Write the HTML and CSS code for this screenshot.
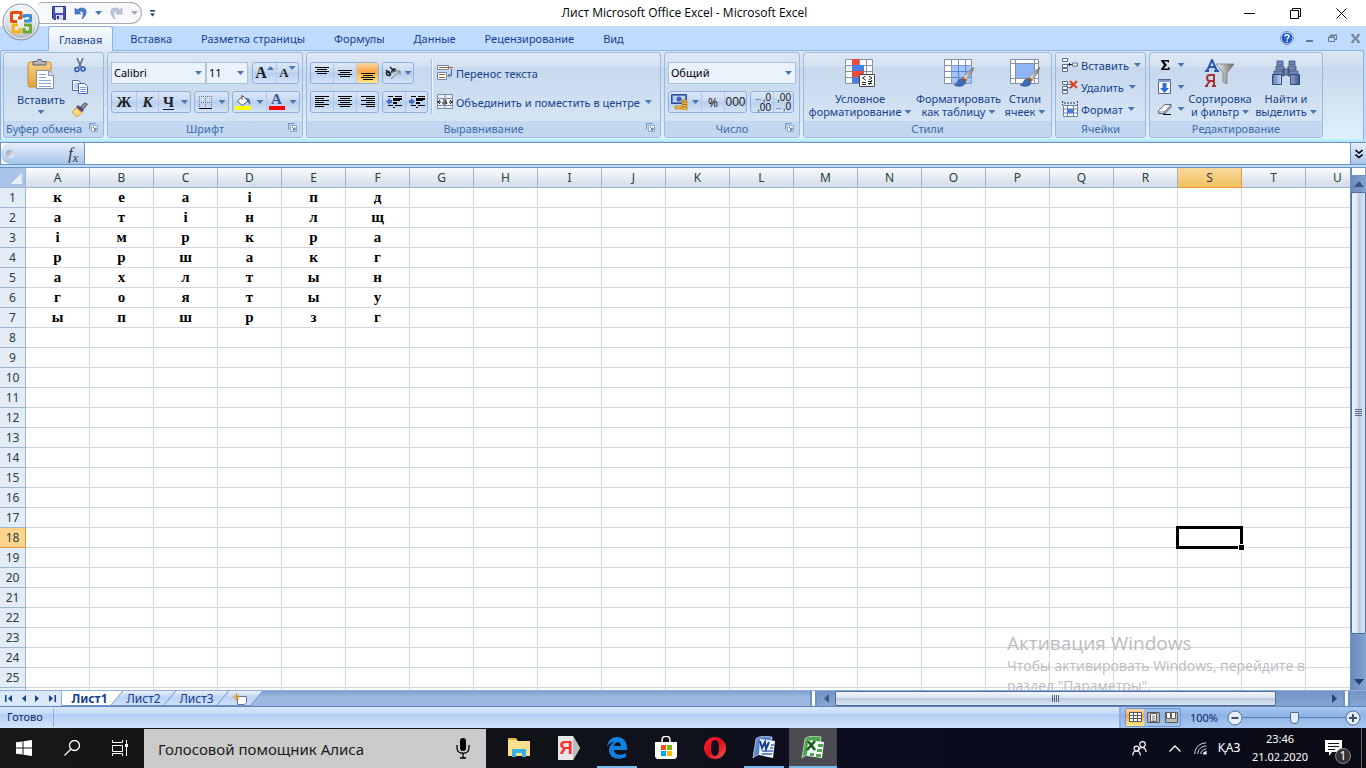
FILE: index.html
```html
<!DOCTYPE html>
<html lang="ru">
<head>
<meta charset="utf-8">
<title>Лист Microsoft Office Excel - Microsoft Excel</title>
<link rel="stylesheet" href="styles.css">
</head>
<body>
<svg class="defs" aria-hidden="true">
  <defs>
    <linearGradient id="gClip" x1="0" y1="0" x2="0" y2="1"><stop offset="0" stop-color="#f8d183"/><stop offset="1" stop-color="#e3a13c"/></linearGradient>
    <linearGradient id="gSteel" x1="0" y1="0" x2="1" y2="0"><stop offset="0" stop-color="#f2f2f2"/><stop offset="1" stop-color="#6b6b6b"/></linearGradient>
    <linearGradient id="gBlue" x1="0" y1="0" x2="1" y2="0"><stop offset="0" stop-color="#5a78b4"/><stop offset=".4" stop-color="#dfe9f8"/><stop offset="1" stop-color="#38558f"/></linearGradient>
    <linearGradient id="gOpera" x1="0" y1="0" x2="1" y2="1"><stop offset="0" stop-color="#ff1b2d"/><stop offset=".5" stop-color="#d8101f"/><stop offset="1" stop-color="#ff5a50"/></linearGradient>
    <radialGradient id="gOrb" cx=".5" cy=".3" r=".75"><stop offset="0" stop-color="#fff"/><stop offset=".6" stop-color="#dfe1e8"/><stop offset="1" stop-color="#8f99ad"/></radialGradient>
  </defs>
  <symbol id="i-launch" viewBox="0 0 9 9"><path d="M.5 6.500V.5H6.500" fill="none" stroke="#6f93c0"/><path d="M2.500 2.500H8.500V8.500H2.500Z" fill="#fff" stroke="#8aa9cf"/><path d="M4 4l3 3M7 4.500V7H4.500" fill="none" stroke="#3f5f8f"/></symbol>
  <symbol id="i-grid" viewBox="0 0 30 27"><path d="M.5.5h27v24H.5z" fill="#fff" stroke="#8390a8"/><path d="M7.500 0v25M14.500 0v25M21.500 0v25M0 6.500h28M0 12.500h28M0 18.500h28" stroke="#8390a8"/></symbol>
  <symbol id="i-brush" viewBox="0 0 20 20"><path d="M20 0c-5 3-9 7-11 11l3 2c4-4 7-8 8-13z" fill="url(#gSteel)" stroke="#777" stroke-width=".5"/><path d="M9 10l4 3-2 2-4-2z" fill="#a05a28"/><path d="M7 12c-4 0-3 5-7 6 4 2 11 2 11-3z" fill="#3e6cb5" stroke="#254a8a" stroke-width=".6"/></symbol>
</svg>

<header class="titlebar">
  <button class="orb" aria-label="Кнопка Office">
    <svg viewBox="0 0 38 38"><circle cx="19" cy="19" r="18" fill="url(#gOrb)" stroke="#8c97a8"/><circle cx="19" cy="19" r="16.500" fill="none" stroke="#fff" opacity=".8"/>
      <g fill="none" stroke-width="3" stroke-linejoin="round">
        <path d="M15 18.500H9.500V9.500H19V15h-3" stroke="#e2500f"/><path d="M22 18h6.500v-5.500H22V15" stroke="#3b8fd0"/><path d="M16 22h-5v7h7v-4" stroke="#f5b416"/><path d="M22 22h6.500v7H22v-4" stroke="#6da832"/></g></svg>
  </button>
  <div class="qat">
    <button aria-label="Сохранить"><svg width="14" height="14" viewBox="0 0 14 14"><path d="M.5.5h13v13H2l-1.500-1.500z" fill="#4a50b8" stroke="#30348c"/><path d="M3 1h8v6H3z" fill="#e8edfa"/><path d="M4 9h7v5H4z" fill="#d5d9ea"/><path d="M5 10h2v3H5z" fill="#30348c"/></svg></button>
    <button aria-label="Отменить"><svg width="13" height="13" viewBox="0 0 13 13"><path d="M1 1v6h6L5 5c3-2 6 0 3 7 6-5 5-11 0-11-2 0-4 1-5 2z" fill="#4a7bd0" stroke="#2f5bab" stroke-width=".6"/></svg></button>
    <i class="caret"></i>
    <button aria-label="Вернуть"><svg width="13" height="13" viewBox="0 0 13 13"><path d="M12 1v6H6l2-2C5 3 2 5 5 12-1 7 0 1 5 1c2 0 4 1 5 2z" fill="#bcc8da" stroke="#98a6bd" stroke-width=".6"/></svg></button>
    <i class="caret pale"></i>
  </div>
  <button class="qat-more" aria-label="Настройка панели"><svg width="5" height="7" viewBox="0 0 5 7"><path d="M0 0h5v1.500H0zM0 3.500h5L2.500 6.500z" fill="#1e3e7a"/></svg></button>
  <h1>Лист Microsoft Office Excel - Microsoft Excel</h1>
  <div class="win-controls">
    <button aria-label="Свернуть"><svg width="11" height="11" viewBox="0 0 11 11"><path d="M0 5.500h11" stroke="#000"/></svg></button>
    <button aria-label="Восстановить"><svg width="11" height="11" viewBox="0 0 11 11"><path d="M.5 2.500h8v8h-8zM2.500 2.500v-2h8v8h-2" fill="none" stroke="#000"/></svg></button>
    <button aria-label="Закрыть"><svg width="11" height="11" viewBox="0 0 11 11"><path d="M.5.5l10 10M10.500.5l-10 10" stroke="#000"/></svg></button>
  </div>
</header>

<nav class="tabs">
  <button class="active">Главная</button><button>Вставка</button><button>Разметка страницы</button><button>Формулы</button><button>Данные</button><button>Рецензирование</button><button>Вид</button>
  <div class="doc-controls">
    <button class="help" aria-label="Справка"><svg width="14" height="14" viewBox="0 0 14 14"><circle cx="7" cy="7" r="6.500" fill="#fff" stroke="#6f90c4"/><circle cx="7" cy="7" r="5.500" fill="#2459c8"/><path d="M5 5.500C5 3 9 3 9 5.500 9 7 7 7 7 8.500M7 9.500v1.500" fill="none" stroke="#fff" stroke-width="1.500"/></svg></button>
    <button aria-label="Свернуть окно"><svg width="9" height="9" viewBox="0 0 9 9"><path d="M1 7h7" stroke="#6b7687" stroke-width="2"/></svg></button>
    <button aria-label="Восстановить окно"><svg width="9" height="9" viewBox="0 0 9 9"><path d="M.5 3.500h6v4h-6zM2.500 3V1.500h6v4H7" fill="none" stroke="#6b7687"/><path d="M0 3h7M2 1h7" stroke="#6b7687"/></svg></button>
    <button aria-label="Закрыть окно"><svg width="9" height="9" viewBox="0 0 9 9"><path d="M1 1l7 7M8 1L1 8" stroke="#7b8696" stroke-width="2"/><path d="M0 .5h3M6 .5h3M0 8.500h3M6 8.500h3" stroke="#7b8696"/></svg></button>
  </div>
</nav>

<section class="ribbon">
  <div class="group g-clip">
    <div class="body">
      <button class="big"><svg width="28" height="30" viewBox="0 0 28 30"><rect x="1" y="3" width="23" height="25" rx="2" fill="url(#gClip)" stroke="#c98f38"/><path d="M6 6V2.500h4L11 .5h3l1 2h4V6z" fill="#b5b5b5" stroke="#5f6673"/><path d="M9.500 11.500h12l5 5v13h-17z" fill="#fff" stroke="#8090b0"/><path d="M21.500 11.500v5h5" fill="#dbe4f4" stroke="#8090b0"/><path d="M12 15.500h7M12 18.500h7M12 21.500h12M12 24.500h12M12 27.500h12" stroke="#8aa6d8"/></svg><span>Вставить</span><i class="caret"></i></button>
      <div class="stack">
        <button aria-label="Вырезать"><svg width="12" height="15" viewBox="0 0 12 15"><path d="M3 0l4 9M9 0L5 9" stroke="#5c6b85" stroke-width="1.600"/><circle cx="3" cy="11.500" r="2" fill="none" stroke="#2c55a8" stroke-width="1.500"/><circle cx="9" cy="11" r="2" fill="none" stroke="#2c55a8" stroke-width="1.500"/></svg></button>
        <button aria-label="Копировать"><svg width="16" height="14" viewBox="0 0 16 14"><path d="M.5.500h6l2 2v8h-8z" fill="#fff" stroke="#4a6ab0"/><path d="M2 4h5M2 6h5M2 8h5" stroke="#7e9fd8"/><path d="M6.500 3.500h6l3 3v7h-9z" fill="#fff" stroke="#4a6ab0"/><path d="M8 7.500h6M8 9.500h6M8 11.500h6" stroke="#7e9fd8"/></svg></button>
        <button aria-label="Формат по образцу"><svg width="16" height="15" viewBox="0 0 16 15"><path d="M15.500 2l-4 5-3-2 4-4z" fill="#8b8f98" stroke="#4b5466"/><path d="M6 3l6 5-2 2.500-6-5z" fill="#5b4a80"/><path d="M4 5.500l6 5-4 4c-2 0-5-2-5.500-5z" fill="#f7dc7c" stroke="#bd8c28" stroke-width=".8"/></svg></button>
      </div>
    </div>
    <footer>Буфер обмена<button aria-label="Параметры"><svg width="9" height="9"><use href="#i-launch"/></svg></button></footer>
  </div>

  <div class="group g-font">
    <div class="body rows">
      <div class="row">
        <label class="combo name"><select aria-label="Шрифт"><option>Calibri</option></select><i class="caret"></i></label><label class="combo size"><select aria-label="Размер"><option>11</option></select><i class="caret"></i></label>
        <div class="btns gap4"><button aria-label="Увеличить" class="w23 serif"><span class="a-big">A</span><i class="caret up"></i></button><button aria-label="Уменьшить" class="w22 serif"><span class="a-small">A</span><i class="caret top"></i></button></div>
      </div>
      <div class="row">
        <div class="btns"><button class="w24 serif">Ж</button><button class="w22 serif it">К</button><button class="w20 serif un">Ч</button><button class="w12" aria-label="Ещё"><i class="caret"></i></button></div>
        <div class="btns"><button class="w20" aria-label="Границы"><svg width="13" height="13" viewBox="0 0 13 13"><path d="M.5 0v12M6.500 0v12M12.500 0v12M0 .5h13M0 6.500h13" stroke="#777" stroke-dasharray="1 1"/><path d="M0 12.500h13" stroke="#000"/></svg></button><button class="w13" aria-label="Ещё"><i class="caret"></i></button></div>
        <div class="btns"><button class="w20" aria-label="Заливка"><svg width="16" height="16" viewBox="0 0 16 16"><path d="M2.500 7L8 2l5 5-6 4.500z" fill="#fff" stroke="#555"/><path d="M7 6V1" stroke="#555"/><path d="M11 4c4 0 5 3 4 7-2-1-1-4-4-5z" fill="#456fb8"/><path d="M0 12h16v4H0z" fill="#ff0"/></svg></button><button class="w13" aria-label="Ещё"><i class="caret"></i></button><button class="w20 fontcolor" aria-label="Цвет текста">A</button><button class="w13" aria-label="Ещё"><i class="caret"></i></button></div>
      </div>
    </div>
    <footer>Шрифт<button aria-label="Параметры"><svg width="9" height="9"><use href="#i-launch"/></svg></button></footer>
  </div>

  <div class="group g-align">
    <div class="body">
      <div class="rows">
        <div class="row">
          <div class="btns"><button class="w22" aria-label="По верхнему краю"><svg width="14" height="18" viewBox="0 0 14 18"><path d="M0 3.500h14M2 5.500h10M0 7.500h14M2 9.500h10" stroke="#000"/></svg></button><button class="w23" aria-label="По середине"><svg width="14" height="18" viewBox="0 0 14 18"><path d="M0 6.500h14M2 8.500h10M0 10.500h14M2 12.500h10" stroke="#000"/></svg></button><button class="w22 on" aria-label="По нижнему краю"><svg width="14" height="18" viewBox="0 0 14 18"><path d="M0 9.500h14M2 11.500h10M0 13.500h14M2 15.500h10" stroke="#000"/></svg></button></div>
          <div class="btns"><button class="w30" aria-label="Ориентация"><svg width="16" height="14" viewBox="0 0 16 14"><g fill="none" stroke="#222" stroke-width="1.500"><path d="M1 4l5 5M2 9c-2-3 2-5 3-2s0 3-3 2M5 1l5 5M7 7c-1-3 2-5 4-3"/></g><path d="M6 13l9-8M11 5h4v4" fill="none" stroke="#777"/></svg><i class="caret"></i></button></div>
        </div>
        <div class="row">
          <div class="btns"><button class="w22" aria-label="По левому краю"><svg width="14" height="12" viewBox="0 0 14 12"><path d="M0 .5h14M0 2.500h9M0 4.500h14M0 6.500h9M0 8.500h14M0 10.500h9" stroke="#000"/></svg></button><button class="w23" aria-label="По центру"><svg width="14" height="12" viewBox="0 0 14 12"><path d="M0 .5h14M2 2.500h10M0 4.500h14M2 6.500h10M0 8.500h14M2 10.500h10" stroke="#000"/></svg></button><button class="w22" aria-label="По правому краю"><svg width="14" height="12" viewBox="0 0 14 12"><path d="M0 .5h14M5 2.500h9M0 4.500h14M5 6.500h9M0 8.500h14M5 10.500h9" stroke="#000"/></svg></button></div>
          <div class="btns"><button class="w22" aria-label="Уменьшить отступ"><svg width="16" height="14" viewBox="0 0 16 14"><path d="M2 1.500h5M9 1.500h7M7 3.500h9M7 5.500h7M7 8.500h4M2 10.500h5M9 10.500h7M7 12.500h2" stroke="#000"/><path d="M7 4.500h9M7 7.500h4" stroke="#000"/><path d="M0 6.500L4 3v2h2v3H4v2z" fill="#3c6cc8"/></svg></button><button class="w22" aria-label="Увеличить отступ"><svg width="16" height="14" viewBox="0 0 16 14"><path d="M2 1.500h5M9 1.500h7M7 3.500h9M7 5.500h7M7 8.500h4M2 10.500h5M9 10.500h7M7 12.500h2" stroke="#000"/><path d="M7 4.500h9M7 7.500h4" stroke="#000"/><path d="M6 6.500L2 3v2H0v3h2v2z" fill="#3c6cc8"/></svg></button></div>
        </div>
      </div>
      <div class="divider"></div>
      <div class="rows texts">
        <button class="txt"><svg width="16" height="16" viewBox="0 0 16 16"><path d="M.5.5h11v4H.5zM.5 7.500h9v7h-9z" fill="#fff" stroke="#7588a8"/><path d="M2 2.500h14M2 9.500h6M2 12.500h6" stroke="#a4622c"/><path d="M14.500 4v6M11 10.500h4M13 8.500l-2 2 2 2" fill="none" stroke="#4a6a9a"/></svg>Перенос текста</button>
        <button class="txt"><svg width="16" height="16" viewBox="0 0 16 16"><path d="M.5.5h15v14H.5z" fill="#eef3fb" stroke="#7c8ca8"/><path d="M0 4.500h16M0 11.500h16M8 0v4M8 12v3" stroke="#7c8ca8"/><path d="M0 8h4M12 8h4M3 6l-2 2 2 2M13 6l2 2-2 2M6 6h3v4H6V8h3l1 2" fill="none" stroke="#222"/></svg>Объединить и поместить в центре<i class="caret"></i></button>
      </div>
    </div>
    <footer>Выравнивание<button aria-label="Параметры"><svg width="9" height="9"><use href="#i-launch"/></svg></button></footer>
  </div>

  <div class="group g-num">
    <div class="body rows">
      <div class="row"><label class="combo format"><select aria-label="Числовой формат"><option>Общий</option></select><i class="caret"></i></label></div>
      <div class="row">
        <div class="btns"><button class="w32" aria-label="Финансовый формат"><svg width="17" height="16" viewBox="0 0 17 16"><path d="M.5.5h15v9H.5z" fill="#5c83c8" stroke="#2e4d90"/><path d="M2 2h12v6H2z" fill="#b9cdf0"/><circle cx="8" cy="5" r="2.500" fill="#3e62ac"/><path d="M11 6h5v10h-5zM4 12h6v3H4z" fill="#f0b93a" stroke="#a87412" stroke-width=".6"/><path d="M11 8h5M11 10.500h5M11 13h5" stroke="#a87412"/></svg><i class="caret"></i></button><button class="w23 dark">%</button><button class="w22 dark narrow">000</button></div>
        <div class="btns"><button class="w22 digits" aria-label="Увеличить разрядность"><span><b>←</b>,0</span><span>,00</span></button><button class="w20 digits" aria-label="Уменьшить разрядность"><span>,00</span><span><b>→</b>,0</span></button></div>
      </div>
    </div>
    <footer>Число<button aria-label="Параметры"><svg width="9" height="9"><use href="#i-launch"/></svg></button></footer>
  </div>

  <div class="group g-styles">
    <div class="body">
      <button class="big b1"><svg width="30" height="28" viewBox="0 0 30 28"><use href="#i-grid" width="30" height="27"/><path d="M7 0h7v6H7zM7 12h12v6H7z" fill="#f04a3c"/><path d="M7 6h12v6H7zM7 18h7v6H7z" fill="#4d7fe0"/><path d="M14.500 15.500h15v12h-15z" fill="#fff" stroke="#445"/><path d="M20.500 17l-3 2 3 2M17 23.500h4M17 25.500h4M24 17l3 2-3 2M23 22.500h4M23 24.500h4M27 21l-3 5" fill="none" stroke="#222"/></svg><span>Условное<br>форматирование<i class="caret"></i></span></button>
      <button class="big b2"><svg width="30" height="28" viewBox="0 0 30 28"><use href="#i-grid" width="30" height="27"/><path d="M7.500 6.500h20v18h-20z" fill="#8fb5f5" opacity=".8"/><path d="M14.500 6v19M21.500 6v19M7 12.500h21M7 18.500h21" stroke="#5f87cf"/><use href="#i-brush" x="10" y="8" width="20" height="20"/></svg><span>Форматировать<br>как таблицу<i class="caret"></i></span></button>
      <button class="big b3"><svg width="30" height="28" viewBox="0 0 30 28"><path d="M.5.5h28v24H.5z" fill="#fff" stroke="#8390a8"/><path d="M5.500 0v25M24.500 0v25M0 4.500h29M0 19.500h29" stroke="#8390a8"/><path d="M6 5h18v14H6z" fill="#8fb5f5"/><use href="#i-brush" x="10" y="8" width="20" height="20"/></svg><span>Стили<br>ячеек<i class="caret"></i></span></button>
    </div>
    <footer>Стили</footer>
  </div>

  <div class="group g-cells">
    <div class="body stacked">
      <button class="txt"><svg width="16" height="14" viewBox="0 0 16 14"><path d="M.5.5h5v3h-5zM.5 6.500h5v3h-5zM.5 10.500h5v3h-5zM10.500 5h5v3h-5z" fill="#fff" stroke="#5b6d8f"/><path d="M6 6.500h4M8 5L6.500 6.500 8 8" fill="none" stroke="#111"/></svg>Вставить<i class="caret"></i></button>
      <button class="txt"><svg width="16" height="14" viewBox="0 0 16 14"><path d="M.5 1.500h5v3h-5zM.5 6.500h5v3h-5zM.5 10.500h5v3h-5zM5 4.500h5v3H5z" fill="#fff" stroke="#5b6d8f"/><path d="M8 1l7 7M15 1L8 8" stroke="#e2401c" stroke-width="2"/></svg>Удалить<i class="caret"></i></button>
      <button class="txt"><svg width="16" height="16" viewBox="0 0 16 16"><path d="M1.500 4.500h14v11h-14z" fill="#fff" stroke="#6d80a5"/><path d="M5.500 4v12M11.500 4v12M1 8h15M1 12h15" stroke="#6d80a5"/><path d="M6 8h5v4H6z" fill="#3f7de0"/><path d="M.5 0v4M15.500 0v4M2 2h12" stroke="#333" stroke-dasharray="2 1"/></svg>Формат<i class="caret"></i></button>
    </div>
    <footer>Ячейки</footer>
  </div>

  <div class="group g-edit">
    <div class="body">
      <div class="stack icons">
        <button aria-label="Сумма"><svg width="14" height="14" viewBox="0 0 14 14"><path d="M3 2h8v2.500h-1L9.500 3.500H6L9 7l-3.500 3.500H10l.5-1.500h1V12H3v-1l3-4-3-4z" fill="#000"/></svg><i class="caret"></i></button>
        <button aria-label="Заполнить"><svg width="14" height="16" viewBox="0 0 14 16"><path d="M.5.5h12v14H.5z" fill="#fff" stroke="#4f6690"/><path d="M0 2h13" stroke="#7d9ace" stroke-width="2"/><path d="M4.500 4v5H2l4.500 5L11 9H8.500V4z" fill="#2f6bd8"/></svg><i class="caret"></i></button>
        <button aria-label="Очистить"><svg width="14" height="14" viewBox="0 0 14 14"><path d="M.5 8.500L7 2.500h6L7 9.500H.5z" fill="#fff" stroke="#5a6478"/><path d="M.5 8.500v3H7v-2M7 11.500L13 5V2.500" fill="#bcc6da" stroke="#5a6478"/><path d="M5 12.500h8" stroke="#000"/></svg><i class="caret"></i></button>
      </div>
      <button class="big b4"><svg width="30" height="28" viewBox="0 0 30 28"><path d="M11 5h18l-7 9v11l-4-2V14z" fill="url(#gSteel)" stroke="#777" stroke-width=".7"/><g fill="none" stroke-width="2"><path d="M2 12L7 1l5 11M4 8h6M0 12h4M9 12h5" stroke="#2c55b0"/><path d="M9 27V16H5c-4 0-4 6 0 6h4M5 22l-4 5M7 27h4M0 27h3" stroke="#a83330"/></g></svg><span>Сортировка<br>и фильтр<i class="caret"></i></span></button>
      <button class="big b5"><svg width="28" height="28" viewBox="0 0 28 28"><path d="M5 2h6v4H5zM17 2h6v4h-6zM4 7h8v4H4zM16 7h8v4h-8zM2 12h10v5H2zM16 12h10v5H16zM11 10h6v6h-6z" fill="#7187b3" stroke="#2f4470" stroke-width=".7"/><path d="M.5 15.500h9v10h-9zM18.500 15.500h9v10h-9z" fill="url(#gBlue)" stroke="#2f4a80"/></svg><span>Найти и<br>выделить<i class="caret"></i></span></button>
    </div>
    <footer>Редактирование</footer>
  </div>
</section>

<section class="formula">
  <div class="namebox"><i class="knob"></i><button aria-label="Вставить функцию"><em>f</em><sub>x</sub></button></div>
  <input type="text" aria-label="Строка формул">
  <button class="expand" aria-label="Развернуть"><svg width="8" height="10" viewBox="0 0 8 10"><path d="M.5 1L4 4l3.500-3M.5 5.500l3.500 3 3.500-3" fill="none" stroke="#000" stroke-width="1.600"/></svg></button>
</section>

<main class="workspace">
  <div class="sheet">
    <table><thead><tr id="heads"></tr></thead><tbody id="cells"></tbody></table>
    <div class="watermark"><strong>Активация Windows</strong><p>Чтобы активировать Windows, перейдите в раздел "Параметры".</p></div>
  </div>
  <div class="vscroll">
    <div class="split"></div>
    <button aria-label="Вверх"><svg width="10" height="6" viewBox="0 0 10 6"><path d="M5 0l5 6H0z" fill="#3b5680"/></svg></button>
    <div class="thumb"></div>
    <div class="rest"></div>
    <button aria-label="Вниз"><svg width="10" height="6" viewBox="0 0 10 6"><path d="M5 6L0 0h10z" fill="#2a416c"/></svg></button>
  </div>
</main>

<div class="sheetbar">
  <div class="sheetnav">
    <button aria-label="Первый лист"><svg width="7" height="7" viewBox="0 0 7 7"><path d="M0 0h1.500v7H0zM7 0v7L3 3.500z" fill="#15428b"/></svg></button>
    <button aria-label="Предыдущий лист"><svg width="7" height="7" viewBox="0 0 7 7"><path d="M6 0v7L2 3.500z" fill="#15428b"/></svg></button>
    <button aria-label="Следующий лист"><svg width="7" height="7" viewBox="0 0 7 7"><path d="M1 0v7l4-3.500z" fill="#15428b"/></svg></button>
    <button aria-label="Последний лист"><svg width="7" height="7" viewBox="0 0 7 7"><path d="M0 0v7l4-3.500zM5.500 0H7v7H5.500z" fill="#15428b"/></svg></button>
  </div>
  <button class="st current"><span>Лист1</span></button>
  <button class="st"><span>Лист2</span></button>
  <button class="st"><span>Лист3</span></button>
  <button class="st new" aria-label="Вставить лист"><svg width="15" height="12" viewBox="0 0 15 12"><path d="M4.500 3.500h9v6l-2 2h-7z" fill="#fff" stroke="#6678a0"/><path d="M3.500 0v8M0 4h7M1 1.500l5 5M6 1.500l-5 5" stroke="#e59a2c"/></svg></button>
  <div class="spacer"></div>
  <div class="hscroll">
    <i class="hsplit"></i>
    <button aria-label="Влево"><svg width="5" height="9" viewBox="0 0 5 9"><path d="M5 0v9L0 4.500z" fill="#3b5680"/></svg></button>
    <div class="thumb"></div>
    <div class="rest"></div>
    <button aria-label="Вправо"><svg width="5" height="9" viewBox="0 0 5 9"><path d="M0 0v9l5-4.500z" fill="#2a416c"/></svg></button>
    <i class="hsplit"></i>
  </div>
</div>

<footer class="status">
  <span class="ready">Готово</span>
  <div class="spacer"></div>
  <div class="zoombox">
    <div class="views">
      <button class="on" aria-label="Обычный"><svg width="13" height="11" viewBox="0 0 13 11"><path d="M.5.500h12v9H.5zM0 3.500h13M0 6.500h13M4.500 0v10M8.500 0v10" fill="#fff" stroke="#5a5a5a"/></svg></button>
      <button aria-label="Разметка"><svg width="13" height="11" viewBox="0 0 13 11"><path d="M.5.500h12v10H.5z" fill="#bbb" stroke="#5a5a5a"/><path d="M3.500 1.500h6v8h-6z" fill="#fff" stroke="#5a5a5a"/><path d="M5 4h3M5 6h3M5 8h3" stroke="#777"/></svg></button>
      <button aria-label="Страничный"><svg width="13" height="11" viewBox="0 0 13 11"><path d="M.5.500h12v10H.5z" fill="#bbb" stroke="#5a5a5a"/><path d="M1.500.5h4v6h-4zM6.500.5h4v6h-4z" fill="#fff" stroke="#5a5a5a"/></svg></button>
    </div>
    <span class="pct">100%</span>
    <button class="round" aria-label="Уменьшить масштаб"><svg width="16" height="16" viewBox="0 0 16 16"><circle cx="8" cy="8" r="7" fill="#e4eefb" stroke="#4d6b9c"/><path d="M4.500 8h7" stroke="#44506a" stroke-width="2"/></svg></button>
    <input type="range" min="0" max="100" value="50" aria-label="Масштаб">
    <button class="round" aria-label="Увеличить масштаб"><svg width="16" height="16" viewBox="0 0 16 16"><circle cx="8" cy="8" r="7" fill="#e4eefb" stroke="#4d6b9c"/><path d="M4 8h8M8 4v8" stroke="#44506a" stroke-width="2"/></svg></button>
  </div>
</footer>

<footer class="taskbar">
  <button class="t48" aria-label="Пуск"><svg width="16" height="16" viewBox="0 0 16 16"><path d="M0 2.300L6.500 1.400V7.500H0zM7.500 1.200L16 0v7.500H7.500zM0 8.500h6.500v6.100L0 13.700zM7.500 8.500H16V16l-8.500-1.200z" fill="#fff"/></svg></button>
  <button class="t48" aria-label="Поиск"><svg width="16" height="16" viewBox="0 0 16 16"><circle cx="10.500" cy="5.500" r="5" fill="none" stroke="#fff" stroke-width="1.300"/><path d="M7 9L.5 15.500" stroke="#fff" stroke-width="1.300"/></svg></button>
  <button class="t48" aria-label="Представление задач"><svg width="17" height="16" viewBox="0 0 17 16"><path d="M.5 0v2.500h10V0M.5 5.500h10v6H.5zM.5 16v-2.500h10V16M14.500 0v16" fill="none" stroke="#fff"/><path d="M13 4h3v3h-3z" fill="#fff"/></svg></button>
  <button class="alice"><span>Голосовой помощник Алиса</span><svg width="14" height="21" viewBox="0 0 14 21"><rect x="4" y="0" width="6" height="13" rx="3" fill="#000"/><path d="M1 7v3c0 7 12 7 12 0V7M7 15v5M4 20h6" fill="none" stroke="#000" stroke-width="1.300"/></svg></button>
  <div class="apps">
    <button aria-label="Проводник"><svg width="22" height="20" viewBox="0 0 22 20"><path d="M0 1h8l2 2h12v15H0z" fill="#fbe08c"/><path d="M0 0h8l1 2H0z" fill="#e8b43a"/><path d="M4 19v-8h14v8h-4v-4H8v4z" fill="#35b1e6"/></svg></button>
    <button aria-label="Яндекс" class="yandex"><svg width="24" height="24" viewBox="0 0 24 24"><path d="M2 0h15l7 12-7 12H2z" fill="#e8e8e8"/><path d="M17 0l7 12-7 12z" fill="#bbb"/></svg><span>Я</span></button>
    <button aria-label="Edge" class="run"><svg width="20" height="22" viewBox="0 0 20 22"><path d="M0 10C1 3 5 0 10 0c7 0 10 5 10 11v2H7c0 5 7 6 12 3v4C11 24 2 21 2 13c0-4 3-7 6-8C3 5 1 8 0 10zm7-1h7c0-5-6-5-7 0z" fill="#0f7fe0"/></svg></button>
    <button aria-label="Магазин"><svg width="24" height="24" viewBox="0 0 24 24"><path d="M8 7V4c0-5 8-5 8 0v3" fill="none" stroke="#fff" stroke-width="1.500"/><path d="M1 6h22v15l-2 2H3l-2-2z" fill="#fff"/><path d="M7 9h5v5H7z" fill="#f25022"/><path d="M13 9h5v5h-5z" fill="#7fba00"/><path d="M7 15h5v5H7z" fill="#00a4ef"/><path d="M13 15h5v5h-5z" fill="#ffb900"/></svg></button>
    <button aria-label="Opera"><svg width="24" height="24" viewBox="0 0 24 24"><path d="M12 1a11 11 0 1 0 0 22 11 11 0 1 0 0-22zm0 3c3 0 4 4 4 8s-1 8-4 8-4-4-4-8 1-8 4-8z" fill="url(#gOpera)" fill-rule="evenodd"/></svg></button>
    <button aria-label="Word" class="run"><svg width="24" height="24" viewBox="0 0 24 24"><path d="M1 22L4 3c1-3 10-3 16-2l-2 18C11 17 5 18 1 22z" fill="#5a86cf" stroke="#dfe9fa" stroke-width=".7"/><path d="M8 3l15 2-2 17-14-3z" fill="#f2f6fd"/><path d="M19 9h3M18 12h3M10 15h11M10 18h10" stroke="#3f68b4" stroke-width="1.400"/><path d="M8 5l2 7 3-6 1 7 3-7" fill="none" stroke="#1d4190" stroke-width="2"/></svg></button>
    <button aria-label="Excel" class="run focus"><svg width="24" height="24" viewBox="0 0 24 24"><path d="M1 22L4 3c1-3 10-3 16-2l-2 18C11 17 5 18 1 22z" fill="#4ba64b" stroke="#dff5df" stroke-width=".7"/><path d="M7 4l16 2-2 16-15-2z" fill="#f2faf2"/><path d="M17 8h5v3h-5zM16 13h5v3h-5zM15 18h5v3h-5zM9 17h4v3H9z" fill="#50a550"/><path d="M7 5l7 9M14 5L6 14" stroke="#1d5a20" stroke-width="2.600"/></svg></button>
  </div>
  <div class="spacer"></div>
  <div class="tray">
    <button class="p-people" aria-label="Люди"><svg width="15" height="15" viewBox="0 0 15 15"><g fill="none" stroke="#fff" stroke-width="1.200"><circle cx="10.500" cy="3.500" r="2.800"/><path d="M7 9c1-4 7-3 7 2"/><circle cx="4.500" cy="7.500" r="2.400"/><path d="M.8 14.500c0-6 7.500-6 7.500 0"/></g></svg></button>
    <button class="p-up" aria-label="Скрытые значки"><svg width="12" height="7" viewBox="0 0 12 7"><path d="M.5 6.500L6 1l5.500 5.500" fill="none" stroke="#fff" stroke-width="1.300"/></svg></button>
    <button class="p-wifi" aria-label="Сеть"><svg width="13" height="13" viewBox="0 0 13 13"><g fill="none" stroke="#ddd"><path d="M.8 12C1 5 6 1 12 1M3.800 12c0-5 4-8 8.500-8M6.800 12c0-3 3-5 5.500-5"/></g><path d="M9 12.500c0-2 2-3.500 3.500-3.500v3.500z" fill="#fff"/></svg></button>
    <button class="lang">ҚАЗ</button>
    <button class="clock"><time>23:46</time><time>21.02.2020</time></button>
    <button class="notify" aria-label="Уведомления"><svg width="17" height="16" viewBox="0 0 17 16"><path d="M0 0h17v12H7l-3 4v-4H0z" fill="#fff"/><path d="M3 3.500h11M3 6.500h11M3 9.500h7" stroke="#111"/></svg><span>1</span></button>
    <i class="peek"></i>
  </div>
</footer>
<script src="script.js"></script>
</body>
</html>
```
FILE: styles.css
```css
:root { --ink: #15428b; --ui: "Noto Sans", "Open Sans", sans-serif; }
* { box-sizing: border-box; }
body { margin: 0; height: 100vh; display: flex; flex-direction: column; overflow: hidden; font: 11px/13px var(--ui); color: var(--ink); background: #bfdbff; }
button { border: 0; padding: 0; margin: 0; background: none; font: inherit; color: inherit; display: flex; align-items: center; justify-content: center; white-space: nowrap; }
svg { display: block; flex: none; }
.defs { position: absolute; width: 0; height: 0; }
.spacer { flex: 1; }
.caret { flex: none; display: inline-block; width: 7px; height: 4px; background: #4a76b2; clip-path: polygon(0 0, 100% 0, 50% 100%); }
.caret.pale { background: #a4abb8; }

.titlebar { position: relative; height: 26px; flex: none; background: #fff; display: flex; align-items: center; padding-left: 38px; }
.orb { position: absolute; left: 2px; top: 3px; width: 38px; height: 38px; z-index: 2; }
.orb svg { width: 38px; height: 38px; }
.qat { height: 22px; width: 104px; border: 1px solid #a6abb5; border-left: 0; border-radius: 4px 11px 11px 0; background: #f7f8fa; display: flex; align-items: center; gap: 8px; padding-left: 14px; }
.qat-more { width: 20px; height: 20px; }
h1 { position: absolute; inset: 0; margin: 0; font: 12px/26px "Open Sans", sans-serif; color: #000; text-align: center; padding-left: 3px; pointer-events: none; }
.win-controls { margin-left: auto; display: flex; padding-right: 2px; }
.win-controls button { width: 46px; height: 24px; }

.tabs { height: 24px; flex: none; display: flex; gap: 1px; padding-left: 48px; background: #bfdbff; position: relative; z-index: 1; }
.tabs > button { padding: 0 14px; height: 25px; }
.tabs > .active { padding: 0 10px; margin-right: 2px; background: linear-gradient(#f7fbff, #dde8f5); border: 1px solid #8db2e3; border-bottom: 0; border-radius: 3px 3px 0 0; }
.doc-controls { margin-left: auto; display: flex; align-items: center; gap: 14px; padding-right: 6px; }
.help { width: 9px; }

.ribbon { flex: none; display: flex; gap: 3px; padding: 1px 3px 1px 2px; height: 91px; border: 1px solid #8db2e3; border-bottom: 2px solid #b5f3fa; border-radius: 3px; background: linear-gradient(#dbe6f4, #cfdded 18%, #c9d9ed 20%, #e0effb); margin-right: 2px; }
.group { display: flex; flex-direction: column; border: 1px solid #9dbadb; border-radius: 3px; background: linear-gradient(#dde8f5, #d4e1f0 16%, #c7d8ed 17%, #d9e8f6); overflow: hidden; flex: none; }
.body { flex: 1; display: flex; min-height: 0; }
.group > footer { position: relative; height: 16px; background: #c1d8f0; color: #3e6aaa; line-height: 16px; text-align: center; }
.group > footer button { position: absolute; right: 5px; top: 2px; }
.g-clip { width: 101px; } .g-font { width: 196px; } .g-align { width: 355px; } .g-num { width: 136px; }
.g-styles { width: 249px; } .g-cells { width: 91px; } .g-edit { width: 174px; }
.g-clip > footer { text-align: left; padding-left: 2px; }
.g-clip .body { padding-left: 7px; }
.g-clip .big { width: 60px; }
.big { flex-direction: column; justify-content: flex-start; padding-top: 6px; gap: 5px; }
.big span { text-align: center; line-height: 13px; }
.big span .caret { margin-left: 3px; vertical-align: 2px; }
.g-clip .big { gap: 4px; }
.stack { display: flex; flex-direction: column; padding: 1px 0; width: 18px; }
.stack button { height: 22px; }
.stack.icons { width: 36px; padding-left: 6px; }
.stack.icons button { gap: 6px; }
.b1 { width: 112px; } .b2 { width: 85px; } .b3 { width: 48px; } .b4 { width: 68px; } .b5 { width: 64px; }
.rows { display: flex; flex-direction: column; gap: 7px; padding: 9px 3px 0; }
.row { display: flex; gap: 3px; height: 22px; }
.g-font .row:first-child, .g-num .row:first-child { gap: 0; }
.gap4 { margin-left: 4px; }
.btns { display: flex; height: 22px; border: 1px solid #8fb0de; border-radius: 3px; background: linear-gradient(#dce8f7, #c6d8f0 45%, #b8cfee 50%, #d3e3f7); }
.btns button { position: relative; height: 20px; }
.btns button + button { border-left: 1px solid #b2c9e8; }
.btns button.w12, .btns button.w13 { border-left-color: transparent; }
.w12 { width: 12px; } .w13 { width: 13px; } .w20 { width: 20px; } .w22 { width: 22px; } .w23 { width: 23px; } .w24 { width: 24px; } .w30 { width: 30px; gap: 4px; } .w32 { width: 32px; gap: 4px; }
.on { background: linear-gradient(#fcd9a6, #fba340 45%, #ffb958 55%, #ffe78a); }
.serif { font: bold 15px/18px "Liberation Serif", serif; color: #1c1c28; }
.it { font-style: italic; } .un { text-decoration: underline; text-underline-offset: 2px; }
.a-big { font-size: 16px; } .a-small { font-size: 13px; }
.serif .caret { align-self: flex-start; margin-top: 3px; }
.serif.w12 .caret { align-self: center; margin-top: 0; }
.serif .up { transform: rotate(180deg); }
.fontcolor { font: bold 15px/13px "Liberation Serif", serif; color: #3c5690; align-items: flex-start; padding-top: 1px; }
.fontcolor::after { content: ""; position: absolute; left: 2px; right: 1px; bottom: 2px; height: 4px; background: #f00; }
.combo { position: relative; display: block; height: 22px; }
.combo select { appearance: none; width: 100%; height: 22px; border: 1px solid #abc1de; border-radius: 0; background: #eaf2fb; font: 11px/18px var(--ui); color: #000; padding: 0 2px; }
.combo .caret { position: absolute; right: 4px; top: 9px; }
.name { width: 97px; } .size { width: 43px; } .format { width: 128px; }
.divider { width: 2px; height: 55px; margin: 6px 1px 0 0; border-left: 1px solid #a3bfe2; border-right: 1px solid #eef5fc; }
.txt { gap: 3px; justify-content: flex-start; height: 22px; }
.txt .caret { margin-left: 2px; }
.stacked { flex-direction: column; padding: 1px 6px 0; }
.dark { color: #222; font-size: 12px; }
.narrow { font: 12px/14px "Liberation Sans", sans-serif; }
.digits { flex-direction: column; align-items: flex-end; font: 10px/9px "Liberation Sans", sans-serif; color: #111; padding-right: 2px; }
.digits b { color: #2f62c0; font-weight: 400; font-size: 9px; }

.formula { flex: none; display: flex; height: 23px; margin-top: 1px; border: 1px solid #6a93c4; border-right: 0; background: #fff; }
.namebox { width: 84px; border-right: 1px solid #6a93c4; background: linear-gradient(#e6effa, #a6c4ea); display: flex; align-items: center; justify-content: space-between; padding: 0 6px 0 5px; border-radius: 9px 0 0 9px; }
.knob { width: 8px; height: 8px; border-radius: 50%; background: linear-gradient(135deg, #8c97a8, #fff); }
.namebox button { font: 16px/18px "Liberation Serif", serif; color: #333; }
.namebox sub { font-size: 12px; line-height: 10px; font-style: italic; align-self: flex-end; }
.formula input { flex: 1; border: 0; padding: 0 4px; outline: 0; background: #fff; }
.expand { width: 16px; background: linear-gradient(#e6effa, #a6c4ea); border-left: 1px solid #6a93c4; }

.workspace { flex: 1; min-height: 0; display: flex; margin-top: 2px; border-top: 1px solid #6a93c4; background: #fff; }
.sheet { position: relative; flex: 1; min-width: 0; overflow: hidden; }
table { border-spacing: 0; table-layout: fixed; width: 1370px; }
th { font: 12px/19px var(--ui); color: #27413e; padding: 0; height: 20px; width: 64px; border: solid #9eb6ce; border-width: 0 1px 1px 0; background: linear-gradient(#f9fcfd, #d3dbe9); }
tbody th, thead th:first-child { width: 26px; }
tbody th { background: #e4ecf7; }
thead th:first-child { background: linear-gradient(135deg, transparent 50%, #e3ecf8 50%) 10px 4px / 12px 12px no-repeat #a9c4e9; }
thead th.sel { background: linear-gradient(#f9d99f, #f1c15f); border-color: #f29536; }
tbody th.sel { background: #ffd58d; border-color: #f29536; }
td { position: relative; padding: 0; height: 20px; border: solid #d0d7e5; border-width: 0 1px 1px 0; font: bold 15px/19px "Liberation Serif", serif; color: #000; text-align: center; }
td.cursor::before { content: ""; position: absolute; inset: -2px; border: 3px solid #000; z-index: 1; }
td.cursor::after { content: ""; position: absolute; right: -3px; bottom: -3px; width: 5px; height: 5px; background: #000; outline: 1px solid #fff; z-index: 2; }
.watermark { position: absolute; right: 17px; bottom: -6px; width: 326px; color: #bcbcbc; font: 14px/20px "Open Sans", sans-serif; z-index: 3; }
.watermark strong { font-weight: 400; font-size: 19px; line-height: 26px; display: block; }
.watermark p { margin: 0; }

.vscroll { width: 16px; flex: none; display: flex; flex-direction: column; align-items: stretch; background: linear-gradient(90deg, #6a8cbd, #83a3d0); border-left: 1px solid #6a93c4; }
.vscroll .split { height: 8px; background: #fff; border: 1px solid #6a93c4; border-width: 0 0 1px; margin: 0 1px; }
.vscroll button { height: 16px; }
.vscroll .thumb { flex: 441; border: 1px solid #4d6b9c; border-radius: 2px; background: repeating-linear-gradient(#5b6a85 0 1px, transparent 1px 2px) center / 7px 8px no-repeat, linear-gradient(90deg, #eef3fa, #dbe3ef 45%, #bccbe0 50%, #dae7f7); }
.vscroll .rest { flex: 40; }

.sheetbar { flex: none; display: flex; height: 17px; border-top: 1px solid #8fb0de; border-bottom: 1px solid #5e84b8; background: linear-gradient(#7f9fcb, #9db8de 40%); color: var(--ink); }
.sheetnav { display: flex; width: 62px; background: #dbe8fa; border-right: 1px solid #8fb0de; padding: 0 1px; z-index: 2; }
.sheetnav button { flex: 1; }
.st { position: relative; width: 53px; height: 15px; font-size: 12px; isolation: isolate; }
.st::before { content: ""; position: absolute; inset: 0; z-index: -1; transform: skewX(-40deg); background: linear-gradient(#e9f1fc, #bcd4f5 45%, #cfe0f8); border: 1px solid #6f96ca; border-top: 0; border-left: 0; }
.st.current { width: 55px; font-weight: 700; z-index: 1; }
.st.current::before { background: #fff; box-shadow: -10px 0 0 #fff; }
.st.new { width: 34px; }
.hscroll { display: flex; width: 556px; padding-right: 16px; background: linear-gradient(#7394c5, #86a5d3); }
.hscroll button { width: 18px; }
.hsplit { width: 7px; background: #fff; border: 2px solid #6a93c4; border-width: 0 2px; }
.hscroll .thumb { flex: 441; border: 1px solid #4d6b9c; border-radius: 2px; background: repeating-linear-gradient(90deg, #5b6a85 0 1px, transparent 1px 2px) center / 8px 7px no-repeat, linear-gradient(#f2f6fb, #dbe3ef 45%, #bccbe0 50%, #dae7f7); }
.hscroll .rest { flex: 49; }

.status { flex: none; height: 21px; display: flex; align-items: center; background: linear-gradient(#d7e6fa, #c8dcf8 30%, #b3cff5 35%, #d3e4fb); }
.ready { padding-left: 7px; width: 54px; height: 19px; line-height: 17px; border-right: 1px solid #8fb0de; color: #15286b; }
.zoombox { display: flex; align-items: center; height: 21px; border-left: 2px solid #8fb0de; padding: 0 5px 0 4px; background: linear-gradient(#a9c8f0, #8fb4e6 40%, #a9c8f0); }
.views { display: flex; border: 1px solid #6f96ca; border-radius: 2px; }
.views button { width: 18px; height: 17px; }
.pct { width: 46px; text-align: center; color: #15286b; }
.round { width: 16px; }
.zoombox input { appearance: none; width: 102px; height: 14px; margin: 0; background: linear-gradient(#5377ae, #5377ae) center / 100% 1px no-repeat; }
.zoombox input::-webkit-slider-thumb { appearance: none; width: 9px; height: 12px; background: #e4eefb; border: 1px solid #4d6b9c; border-radius: 1px 1px 4px 4px; }

.taskbar { flex: none; height: 40px; display: flex; background: linear-gradient(90deg, #161815, #10121a 45%, #0a0b20 70%, #0a0b14); color: #fff; }
.t48 { width: 48px; }
.alice { width: 342px; height: 39px; align-self: flex-end; background: #cbcbcb; color: #1a1a1a; font: 15px/20px var(--ui); justify-content: space-between; padding: 0 16px 0 14px; }
.apps { display: flex; gap: 1px; padding-left: 9px; }
.apps button { position: relative; width: 48px; }
.apps .run::after { content: ""; position: absolute; left: 4px; right: 4px; bottom: 0; height: 2px; background: #76b9ed; }
.apps .focus { background: #4a4a50; }
.apps .focus::after { left: 0; right: 0; }
.yandex span { position: absolute; inset: 0; padding-right: 4px; font: bold 19px/40px "Liberation Sans", sans-serif; color: #f33; }
.tray { display: flex; align-items: center; font: 12px/18px var(--ui); }
.tray button { height: 40px; }
.p-people { width: 48px; } .p-up { width: 24px; } .p-wifi { width: 26px; }
.lang { width: 32px; }
.tray .clock { flex-direction: column; width: 70px; font-size: 11px; }
.notify { position: relative; width: 46px; padding-right: 10px; }
.notify span { position: absolute; right: 10px; bottom: 4px; width: 16px; height: 16px; border-radius: 50%; background: #333; border: 1px solid #888; line-height: 14px; }
.peek { height: 40px; width: 5px; border-left: 1px solid #666; }
```
FILE: script.js
```js
const letters = ["кеаіпд", "атінлщ", "імркра", "рршакг", "ахлтын", "гоятыу", "ыпшрзг"];
const columns = "ABCDEFGHIJKLMNOPQRSTU";
const cursor = { column: "S", row: 18 };
const lastLabelled = 25;

function add(parent, tag, text, className) {
  const el = document.createElement(tag);
  el.textContent = text;
  if (className) el.className = className;
  parent.appendChild(el);
  return el;
}

const heads = document.getElementById("heads");
add(heads, "th", "");
for (const c of columns) add(heads, "th", c, c === cursor.column ? "sel" : "");

const body = document.getElementById("cells");
for (let r = 1; r <= lastLabelled + 1; r++) {
  const tr = add(body, "tr", "");
  add(tr, "th", r <= lastLabelled ? r : "", r === cursor.row ? "sel" : "");
  [...columns].forEach((c, i) => {
    const line = letters[r - 1] || "";
    add(tr, "td", line[i] || "", c === cursor.column && r === cursor.row ? "cursor" : "");
  });
}
```
